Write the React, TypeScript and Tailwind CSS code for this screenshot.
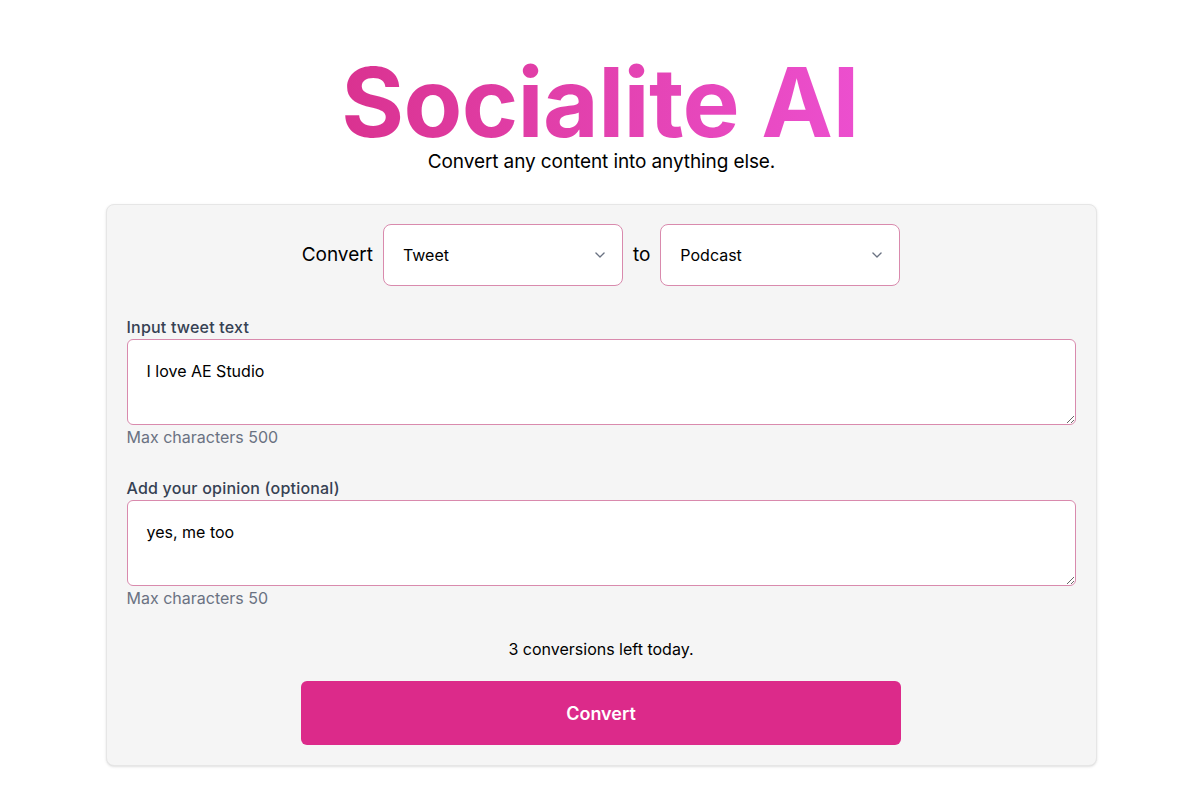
import React from "react";

function Chevron() {
  return (
    <svg width="18" height="18" viewBox="0 0 20 20" fill="none" className="text-gray-500">
      <path d="M5.5 7.75l4.5 4.5 4.5-4.5" stroke="currentColor" strokeWidth="1.5" strokeLinecap="round" strokeLinejoin="round" />
    </svg>
  );
}

function Select({ value }: { value: string }) {
  return (
    <div className="w-[240px] h-[62px] bg-white border border-[#d98aad] rounded-lg flex items-center justify-between pl-[19px] pr-[13px]">
      <span className="text-[16px] text-black">{value}</span>
      <Chevron />
    </div>
  );
}

function Field({ label, value, hint }: { label: string; value: string; hint: string }) {
  return (
    <div className="flex flex-col">
      <div className="text-[16px] leading-6 font-medium tracking-[0.2px] text-gray-700">{label}</div>
      <textarea
        readOnly
        value={value}
        className="w-full h-[86px] bg-white border border-[#d98aad] rounded-md px-[19px] pt-[19px] text-[16px] leading-6 text-black resize-y outline-none"
      />
      <div className="text-[16px] leading-6 text-gray-500">{hint}</div>
    </div>
  );
}

export default function App() {
  return (
    <div className="min-h-[800px] bg-white flex flex-col items-center" style={{ fontFamily: "Inter, 'Noto Sans', sans-serif" }}>
      <h1 className="mt-[56px] text-[96px] leading-[92px] font-bold tracking-[-0.6px] bg-gradient-to-r from-[#da3290] to-[#ec4fcf] bg-clip-text text-transparent">
        Socialite AI
      </h1>
      <p className="text-[19px] leading-7 text-black tracking-[-0.1px] ml-[3px]">Convert any content into anything else.</p>
      <div className="mt-[28px] ml-[2px] w-[991px] bg-[#f5f5f5] border border-[#e6e6e6] rounded-lg shadow-sm px-5 pt-[19px] pb-5">
        <div className="flex items-center justify-center gap-[10px]">
          <span className="text-[19px] text-black">Convert</span>
          <Select value="Tweet" />
          <span className="text-[19px] text-black">to</span>
          <Select value="Podcast" />
        </div>
        <div className="mt-[29px]">
          <Field label="Input tweet text" value="I love AE Studio" hint="Max characters 500" />
        </div>
        <div className="mt-[27px]">
          <Field label="Add your opinion (optional)" value="yes, me too" hint="Max characters 50" />
        </div>
        <div className="mt-[27px] text-center text-[16px] leading-6 text-black">3 conversions left today.</div>
        <div className="mt-[20px] flex justify-center">
          <button className="w-[600px] h-[64px] rounded-md bg-[#dc2a8a] text-white text-[18px] font-semibold">Convert</button>
        </div>
      </div>
    </div>
  );
}
